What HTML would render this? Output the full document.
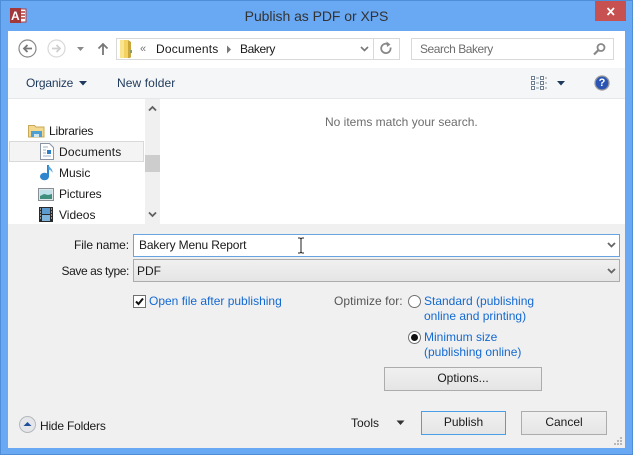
<!DOCTYPE html>
<html><head><meta charset="utf-8">
<style>
html,body{margin:0;padding:0}
body{width:633px;height:455px;overflow:hidden;position:relative;background:#69a9f3;font-family:"Liberation Sans",sans-serif;font-size:12px;color:#1a1a1a}
div,span,svg{position:absolute;box-sizing:border-box}
.t{white-space:nowrap;line-height:16px}
.b{color:#1469d1}
.btn{border:1px solid #acacac;background:linear-gradient(#f0f0f0,#e5e5e5);text-align:center;line-height:21px}
</style></head><body>
<div style="left:0;top:0;width:633px;height:455px;border:1px solid #4f8ed6"></div>
<svg style="left:9px;top:7px" width="18" height="17" viewBox="0 0 18 17"><rect x="6" y="2" width="11" height="13" fill="#fff" stroke="#b03a3a"/><path d="M8 5h8M8 8h8M8 11h8" stroke="#b03a3a" stroke-width="1.500"/><rect x="1" y="1" width="11" height="15" fill="#a4373a"/></svg>
<div class="t" style="left:11px;top:8px;color:#fff;font-weight:bold;font-size:12px;width:9px">A</div>
<div class="t" style="left:0;top:8px;width:633px;text-align:center;font-size:14px;color:#333;letter-spacing:-.05px">Publish as PDF or XPS</div>
<div style="left:595px;top:1px;width:31px;height:20px;background:#c75050"></div>
<svg style="left:606px;top:7px" width="10" height="9"><path d="M1.500 1l6.500 7M8 1L1.500 8" stroke="#fff" stroke-width="1.700"/></svg>

<div style="left:8px;top:31px;width:617px;height:417px;background:#f0f0f0"></div>
<div style="left:8px;top:31px;width:617px;height:193px;background:#fff"></div>

<!-- nav -->
<svg style="left:18px;top:39px" width="20" height="20"><circle cx="9.500" cy="9.500" r="8.500" fill="#fff" stroke="#888" stroke-width="1.200"/><path d="M14 9.500H6M9.500 6L6 9.500l3.500 3.500" fill="none" stroke="#777" stroke-width="1.800"/></svg>
<svg style="left:47px;top:39px" width="20" height="20"><circle cx="9.500" cy="9.500" r="8.500" fill="#fff" stroke="#d8d8d8" stroke-width="1.200"/><path d="M5 9.500h8M9.500 6l3.500 3.500-3.500 3.500" fill="none" stroke="#d0d0d0" stroke-width="1.800"/></svg>
<svg style="left:76px;top:46px" width="9" height="6"><path d="M1 1h7L4.500 5z" fill="#8a8a8a"/></svg>
<svg style="left:97px;top:42px" width="12" height="14"><path d="M6 13V2M1.500 6.500L6 2l4.500 4.500" fill="none" stroke="#777" stroke-width="1.800"/></svg>

<div style="left:116px;top:38px;width:284px;height:22px;border:1px solid #d9d9d9;background:#fff"></div>
<div style="left:373px;top:39px;width:1px;height:20px;background:#d9d9d9"></div>
<svg style="left:120px;top:39px" width="13" height="20"><path d="M0 1h8l2 2v16H0z" fill="#f3d263"/><path d="M8 1v18h2l1-1V3z" fill="#c9a53a"/><path d="M0 1h4v18H0z" fill="#f9e48f"/><rect x="10" y="11" width="2" height="3" fill="#8a9b6a"/></svg>
<div class="t" style="left:140px;top:41px;color:#777;font-size:11px">&#171;</div>
<div class="t" style="left:156px;top:41px;letter-spacing:.2px">Documents</div>
<svg style="left:226px;top:45px" width="6" height="9"><path d="M1 .5l4 4-4 4z" fill="#777"/></svg>
<div class="t" style="left:240px;top:41px;letter-spacing:-.4px">Bakery</div>
<svg style="left:360px;top:46px" width="9" height="7"><path d="M1 1l3.500 3.500L8 1" fill="none" stroke="#777" stroke-width="1.600"/></svg>
<svg style="left:380px;top:41px" width="13" height="15"><path d="M10.500 6.500a4.700 4.700 0 1 1-2-3" fill="none" stroke="#888" stroke-width="1.800"/><path d="M6.500 .5l4 3-3.500 2.500z" fill="#888"/></svg>

<div style="left:411px;top:38px;width:203px;height:22px;border:1px solid #d9d9d9;background:#fff"></div>
<div class="t" style="left:420px;top:41px;color:#6d6d6d;letter-spacing:-.45px">Search Bakery</div>
<svg style="left:592px;top:42px" width="15" height="14"><circle cx="9" cy="5.500" r="3.500" fill="none" stroke="#888" stroke-width="1.800"/><path d="M6.500 8L2 12.500" stroke="#888" stroke-width="2.200"/></svg>

<!-- toolbar -->
<div style="left:8px;top:68px;width:617px;height:31px;background:#f5f6f7;border-bottom:1px solid #e5e7e9"></div>
<div class="t" style="left:26px;top:75px;color:#1e395b;letter-spacing:-.2px">Organize</div>
<svg style="left:79px;top:81px" width="9" height="6"><path d="M0 0h8L4 4.500z" fill="#1e395b"/></svg>
<div class="t" style="left:117px;top:75px;color:#1e395b;letter-spacing:.1px">New folder</div>
<svg style="left:531px;top:76px" width="16" height="14"><g fill="#fff" stroke="#6f7f91"><rect x=".5" y=".5" width="3" height="3"/><rect x=".5" y="5.500" width="3" height="3"/><rect x=".5" y="10.500" width="3" height="3"/><rect x="9.500" y=".5" width="3" height="3"/><rect x="9.500" y="5.500" width="3" height="3"/><rect x="9.500" y="10.500" width="3" height="3"/></g><path d="M5 2h3M5 7h3M5 12h3M14 2h2M14 7h2M14 12h2" stroke="#8b97a5"/></svg>
<svg style="left:557px;top:81px" width="9" height="6"><path d="M0 0h8L4 4.500z" fill="#1e395b"/></svg>
<svg style="left:594px;top:75px" width="16" height="16"><circle cx="8" cy="8" r="7" fill="#2a55b5" stroke="#9a9a9a" stroke-width="1.300"/></svg>
<div class="t" style="left:594px;top:75px;width:16px;text-align:center;color:#fff;font-weight:bold;font-size:11px">?</div>

<!-- tree -->
<div style="left:145px;top:99px;width:17px;height:125px;background:#f0f0f0"></div>
<div style="left:160px;top:99px;width:2px;height:125px;background:#fff"></div>
<div style="left:145px;top:155px;width:15px;height:17px;background:#cdcdcd"></div>
<svg style="left:148px;top:105px" width="9" height="7"><path d="M1 5.500L4.500 2 8 5.500" fill="none" stroke="#606060" stroke-width="1.800"/></svg>
<svg style="left:148px;top:211px" width="9" height="7"><path d="M1 1.500L4.500 5 8 1.500" fill="none" stroke="#606060" stroke-width="1.800"/></svg>
<div style="left:9px;top:141px;width:135px;height:21px;background:#f4f4f4;border:1px solid #d9d9d9"></div>

<svg style="left:28px;top:123px" width="17" height="15"><path d="M.5 2.500h6l1.500 1.500h8v10h-15.500z" fill="#f2d98f" stroke="#c9a85a"/><path d="M3 8h11v6H3z" fill="#4f9fd0"/><path d="M6 14v-3h5v3" fill="#cfe6f2"/></svg>
<div class="t" style="left:49px;top:123px;letter-spacing:-.2px">Libraries</div>
<svg style="left:40px;top:143px" width="14" height="17"><path d="M.5 .5h9l4 4v12H.5z" fill="#fff" stroke="#8a95a3"/><path d="M3 4h5M3 7h3M3 10h3M3 13h8" stroke="#9ab0c8"/><rect x="7" y="7" width="4" height="4" fill="#2f7fc2"/></svg>
<div class="t" style="left:59px;top:144px;letter-spacing:.2px">Documents</div>
<svg style="left:40px;top:164px" width="14" height="17"><path d="M8 1v11.500" stroke="#2f86cc" stroke-width="2"/><ellipse cx="4.500" cy="12.500" rx="4.500" ry="3.700" fill="#2f86cc"/><path d="M8.500 1c1 3 4.500 3.500 4 8-1-2.500-2.500-3-4-3.500z" fill="#5aa9e0"/></svg>
<div class="t" style="left:59px;top:165px">Music</div>
<svg style="left:38px;top:188px" width="16" height="13"><rect x=".5" y=".5" width="15" height="12" fill="#dfe6ea" stroke="#8a8f95"/><rect x="2" y="2" width="12" height="9" fill="#bfe0e8"/><path d="M2 8l4-2 4 1 4-1v5H2z" fill="#3f8f7f"/></svg>
<div class="t" style="left:59px;top:186px;letter-spacing:-.1px">Pictures</div>
<svg style="left:39px;top:207px" width="14" height="15"><rect width="14" height="15" fill="#2a2a2a"/><rect x="3" y="1" width="8" height="6" fill="#5b9bd0"/><rect x="3" y="8" width="8" height="6" fill="#7fb4dc"/><path d="M1 2h1M1 5h1M1 8h1M1 11h1M12 2h1M12 5h1M12 8h1M12 11h1" stroke="#fff"/></svg>
<div class="t" style="left:59px;top:207px">Videos</div>
<div class="t" style="left:325px;top:114px;color:#6d6d6d">No items match your search.</div>

<!-- form -->
<div class="t" style="left:0;top:237px;width:129px;text-align:right;letter-spacing:-.1px">File name:</div>
<div style="left:133px;top:234px;width:487px;height:23px;background:#fff;border:1px solid #69a3e0"></div>
<div class="t" style="left:139px;top:237px;letter-spacing:-.15px">Bakery Menu Report</div>
<svg style="left:297px;top:237px" width="8" height="17"><path d="M1 1h2l1 1 1-1h2M4 2v13M1 16h2l1-1 1 1h2" fill="none" stroke="#222"/></svg>
<svg style="left:607px;top:242px" width="9" height="7"><path d="M1 1l3.500 3.500L8 1" fill="none" stroke="#666" stroke-width="1.800"/></svg>

<div class="t" style="left:0;top:263px;width:129px;text-align:right;letter-spacing:-.4px">Save as type:</div>
<div style="left:133px;top:259px;width:487px;height:23px;background:linear-gradient(#f0f0f0,#e5e5e5);border:1px solid #acacac"></div>
<div class="t" style="left:137px;top:263px">PDF</div>
<svg style="left:607px;top:268px" width="9" height="7"><path d="M1 1l3.500 3.500L8 1" fill="none" stroke="#666" stroke-width="1.800"/></svg>

<div style="left:133px;top:295px;width:13px;height:13px;background:#fff;border:1px solid #707070"></div>
<svg style="left:134px;top:296px" width="11" height="11"><path d="M2 5.500l2.500 2.500L9 2.500" fill="none" stroke="#111" stroke-width="2"/></svg>
<div class="t b" style="left:149px;top:293px">Open file after publishing</div>

<div class="t" style="left:334px;top:293px;color:#555;letter-spacing:.05px">Optimize for:</div>
<svg style="left:408px;top:295px" width="13" height="13"><circle cx="6.500" cy="6.500" r="6" fill="#fff" stroke="#707070"/></svg>
<div class="t b" style="left:424px;top:293px">Standard (publishing</div>
<div class="t b" style="left:424px;top:308px">online and printing)</div>
<svg style="left:408px;top:331px" width="13" height="13"><circle cx="6.500" cy="6.500" r="6" fill="#fff" stroke="#707070"/><circle cx="6.500" cy="6.500" r="3.500" fill="#111"/></svg>
<div class="t b" style="left:424px;top:329px">Minimum size</div>
<div class="t b" style="left:424px;top:344px">(publishing online)</div>

<div class="btn" style="left:384px;top:367px;width:158px;height:24px">Options...</div>

<svg style="left:19px;top:416px" width="17" height="17"><circle cx="8.500" cy="8.500" r="8" fill="#e4e6ea" stroke="#b5b8bd"/><path d="M4.500 10L8.500 6l4 4z" fill="#1f4e9c"/></svg>
<div class="t" style="left:40px;top:418px;letter-spacing:-.2px">Hide Folders</div>
<div class="t" style="left:351px;top:415px">Tools</div>
<svg style="left:396px;top:420px" width="9" height="6"><path d="M.5 .5h8L4.500 5z" fill="#333"/></svg>
<div class="btn" style="left:421px;top:411px;width:85px;height:24px;border-color:#4a9fe8">Publish</div>
<div class="btn" style="left:521px;top:411px;width:86px;height:24px">Cancel</div>
<svg style="left:613px;top:436px" width="10" height="10" fill="#b8b8b8"><rect x="7" y="1" width="2" height="2"/><rect x="4" y="4" width="2" height="2"/><rect x="7" y="4" width="2" height="2"/><rect x="1" y="7" width="2" height="2"/><rect x="4" y="7" width="2" height="2"/><rect x="7" y="7" width="2" height="2"/></svg>
</body></html>
